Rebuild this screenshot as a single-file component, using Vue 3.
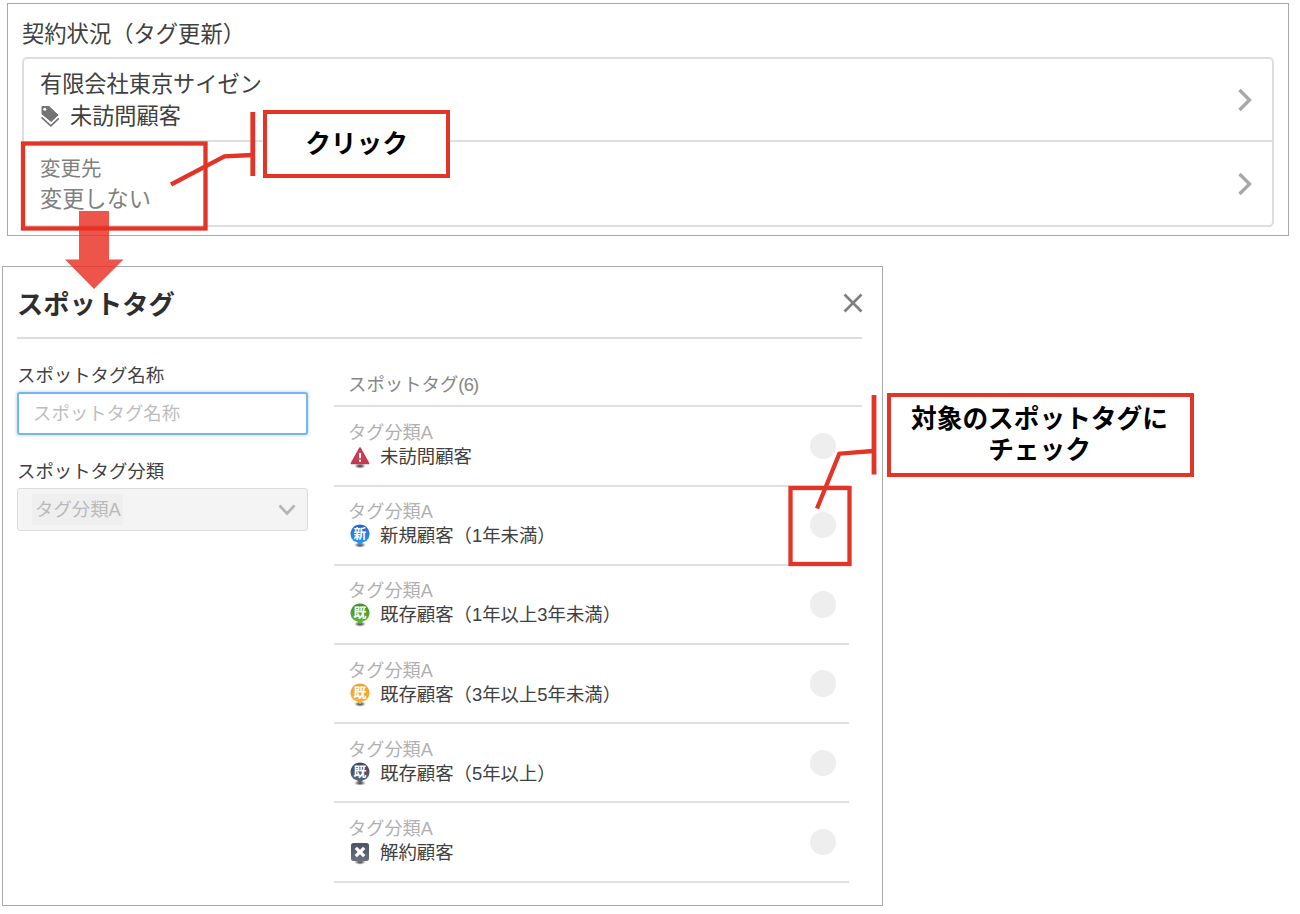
<template>
  <div class="page">
    <section class="contract-panel">
      <h2 class="contract-title">契約状況（タグ更新）</h2>
      <div class="contract-box">
        <div class="contract-row current">
          <div class="row-text">
            <div class="company">有限会社東京サイゼン</div>
            <div class="current-tag">
              <svg class="tags-icon" viewBox="0 0 20 24">
                <path d="M2 1.500h7l9 8.500-6.800 6.500L2 9z" fill="#747474" stroke="#747474" stroke-linejoin="round" />
                <circle cx="4.800" cy="4.300" r="1.500" fill="#fff" />
                <path d="M1.600 12.400l9.200 8.500 8-7.500" fill="none" stroke="#747474" stroke-width="1.600" />
              </svg>
              <span>未訪問顧客</span>
            </div>
          </div>
          <svg class="chevron" viewBox="0 0 14 24"><path d="M1.500 2L11.500 12 1.500 22" fill="none" stroke="#a8a8a8" stroke-width="3.400" /></svg>
        </div>
        <div class="contract-row next">
          <div class="row-text">
            <div class="change-label">変更先</div>
            <div class="change-value">変更しない</div>
          </div>
          <svg class="chevron" viewBox="0 0 14 24"><path d="M1.500 2L11.500 12 1.500 22" fill="none" stroke="#a8a8a8" stroke-width="3.400" /></svg>
        </div>
      </div>
    </section>

    <section class="modal">
      <header class="modal-header">
        <h1>スポットタグ</h1>
        <button class="close-button">
          <svg viewBox="0 0 20 20"><path d="M1.500 1.500l17 17M18.500 1.500l-17 17" fill="none" stroke="#808080" stroke-width="2.700" /></svg>
        </button>
      </header>

      <div class="modal-body">
        <form class="filters">
          <label for="tag-name">スポットタグ名称</label>
          <input id="tag-name" v-model="keyword" class="name-input" type="text" placeholder="スポットタグ名称" />
          <label class="category-label">スポットタグ分類</label>
          <div class="category-select">
            <span class="chip">タグ分類A</span>
            <svg class="arrow-down" viewBox="0 0 18 12"><path d="M1.500 1.500L9 9.500l7.500-8" fill="none" stroke="#b4b4b4" stroke-width="2.600" /></svg>
          </div>
        </form>

        <div class="tag-area">
          <div class="tag-count">スポットタグ<span>({{ tags.length }})</span></div>
          <ul class="tag-list">
            <li v-for="tag in tags" :key="tag.id" class="tag-row">
              <div class="tag-text">
                <div class="tag-category">{{ tag.category }}</div>
                <div class="tag-name">
                  <svg class="pin" viewBox="0 0 20 24">
                    <defs>
                      <radialGradient :id="'shadow' + tag.id">
                        <stop offset="0" stop-color="#222" stop-opacity="0.95" />
                        <stop offset="0.5" stop-color="#444" stop-opacity="0.6" />
                        <stop offset="1" stop-color="#777" stop-opacity="0" />
                      </radialGradient>
                      <linearGradient :id="'fill' + tag.id" x1="0" y1="0" x2="0" y2="1">
                        <stop offset="0" :stop-color="tag.top" />
                        <stop offset="1" :stop-color="tag.bottom" />
                      </linearGradient>
                    </defs>
                    <ellipse cx="10" cy="21" rx="6" ry="2.800" :fill="`url(#shadow${tag.id})`" />
                    <template v-if="tag.shape === 'alert'">
                      <path d="M10 3L18.600 18.500H1.400z" :fill="`url(#fill${tag.id})`" :stroke="tag.bottom" stroke-width="1.600" stroke-linejoin="round" />
                      <path d="M10 8v5.200M10 14.800v2" stroke="#fff" stroke-width="2" />
                    </template>
                    <template v-else-if="tag.shape === 'cross'">
                      <path d="M3.500 2h13a2.500 2.500 0 0 1 2.500 2.500v13a2.500 2.500 0 0 1-2.500 2.500H12l-2 1.600-2-1.600H3.500a2.500 2.500 0 0 1-2.500-2.500v-13a2.500 2.500 0 0 1 2.500-2.500z" :fill="`url(#fill${tag.id})`" />
                      <path d="M5.800 6.800l8.400 8.400M14.200 6.800l-8.400 8.400" stroke="#fff" stroke-width="3.200" />
                    </template>
                    <template v-else>
                      <path d="M10 .5a9.400 9.400 0 0 1 6.300 16.400L13 18.300 10 21.500l-3-3.200-3.300-1.400A9.400 9.400 0 0 1 10 .5z" :fill="`url(#fill${tag.id})`" />
                      <text x="10" y="14.300" text-anchor="middle" class="pin-text">{{ tag.mark }}</text>
                    </template>
                  </svg>
                  <span>{{ tag.name }}</span>
                </div>
              </div>
              <span class="check-circle"></span>
            </li>
          </ul>
        </div>
      </div>
    </section>

    <!-- guide lines drawn over both screens -->
    <svg class="guides" width="1300" height="914" viewBox="0 0 1300 914">
      <g fill="none" stroke="#e23427" stroke-width="4.300">
        <rect x="23" y="143.500" width="182.500" height="85" />
        <rect x="790.500" y="488" width="59" height="76" />
        <path d="M171 184.500L224.500 156.300L252 155" />
        <path d="M817 508.500L839.300 453.700L873 451" />
        <path d="M252.800 112v64M874 395v79.500" stroke-width="4.800" />
      </g>
      <path d="M79 211h30v48.500h14.500L94 289 65 259.500h14z" fill="#e92e22" fill-opacity="0.820" />
    </svg>
    <div class="callout click">クリック</div>
    <div class="callout check">対象のスポットタグに<br />チェック</div>
  </div>
</template>

<script setup>
import { ref } from 'vue';

const keyword = ref('');

const tags = [
  { id: 1, category: 'タグ分類A', name: '未訪問顧客', shape: 'alert', top: '#d94a5c', bottom: '#c23a50' },
  { id: 2, category: 'タグ分類A', name: '新規顧客（1年未満）', shape: 'pin', mark: '新', top: '#2463cf', bottom: '#2e9bf0' },
  { id: 3, category: 'タグ分類A', name: '既存顧客（1年以上3年未満）', shape: 'pin', mark: '既', top: '#3f9429', bottom: '#67b92e' },
  { id: 4, category: 'タグ分類A', name: '既存顧客（3年以上5年未満）', shape: 'pin', mark: '既', top: '#eda02c', bottom: '#f4b638' },
  { id: 5, category: 'タグ分類A', name: '既存顧客（5年以上）', shape: 'pin', mark: '既', top: '#41455f', bottom: '#62677c' },
  { id: 6, category: 'タグ分類A', name: '解約顧客', shape: 'cross', top: '#4c5163', bottom: '#6c7484' },
];
</script>

<style>
body {
  background: #fff;
}
</style>

<style scoped>
.page {
  position: relative;
  width: 1300px;
  height: 914px;
  overflow: hidden;
  font-family: "Liberation Sans", "Noto Sans CJK JP", sans-serif;
  color: #404040;
}

.page * {
  box-sizing: border-box;
}

.contract-panel {
  width: 1282px;
  height: 233px;
  margin: 3px 0 0 7px;
  padding: 15px 14px 0;
  border: 1px solid #a9a9a9;
  display: flow-root;
}

.contract-title {
  margin: 0;
  height: 38px;
  font-size: 22.3px;
  font-weight: 400;
  line-height: 32px;
}

.contract-box {
  height: 170px;
  border: 2px solid #dfdfdf;
  border-radius: 5px;
}

.contract-row {
  display: flex;
  align-items: center;
  justify-content: space-between;
  margin-left: 16px;
  padding-right: 20px;
  height: 83px;
}

.contract-row.current {
  border-bottom: 2px solid #dfdfdf;
}

.row-text {
  font-size: 22.2px;
  line-height: 32px;
}

.current .row-text {
  padding-top: 2px;
}

.current-tag {
  display: flex;
  align-items: center;
  gap: 10px;
}

.tags-icon {
  width: 20px;
  height: 24px;
}

.next .row-text {
  color: #808080;
  line-height: 31px;
}

.change-label {
  font-size: 20.5px;
}

.chevron {
  width: 14px;
  height: 24px;
}

.modal {
  width: 881px;
  height: 640px;
  margin: 30px 0 0 2px;
  padding: 0 20px 0 14px;
  border: 1px solid #a9a9a9;
}

.modal-header {
  display: flex;
  justify-content: space-between;
  align-items: center;
  height: 72px;
  padding-top: 2px;
  border-bottom: 2px solid #dcdcdc;
}

.modal-header h1 {
  margin: 0;
  padding-top: 3px;
  font-size: 26.3px;
  line-height: 36px;
  color: #2e2e2e;
}

.close-button {
  width: 20px;
  height: 20px;
  margin-right: -1px;
  padding: 0;
  border: none;
  background: none;
}

.close-button svg {
  display: block;
}

.modal-body {
  display: flex;
  gap: 26px;
}

.filters {
  display: flex;
  flex-direction: column;
  width: 291px;
  padding-top: 22px;
  font-size: 18.4px;
}

.filters label {
  height: 31px;
  padding-top: 1px;
  line-height: 28px;
}

.name-input {
  height: 43px;
  padding: 0 14px;
  border: 2px solid #79b5ec;
  border-radius: 3px;
  box-shadow: 0 0 3px 1px #c9e3fa;
  font: inherit;
  outline: none;
}

.name-input::placeholder {
  color: #bdbdbd;
}

.filters .category-label {
  margin-top: 22px;
}

.category-select {
  display: flex;
  align-items: center;
  justify-content: space-between;
  height: 43px;
  padding: 0 11px 0 14px;
  background: #f4f4f4;
  border: 1.5px solid #dcdcdc;
  border-radius: 3px;
}

.chip {
  padding: 0 2px 0 3px;
  background: #efefef;
  color: #b9b9b9;
  line-height: 31px;
}

.arrow-down {
  width: 18px;
  height: 12px;
}

.tag-area {
  flex: 1;
  font-size: 18.4px;
}

.tag-count {
  height: 68.4px;
  padding: 32px 0 0 14px;
  border-bottom: 2px solid #e0e0e0;
  color: #868686;
  line-height: 28px;
}

.tag-count span {
  letter-spacing: -0.8px;
}

.tag-list {
  margin: 0 13px 0 0;
  padding: 0;
  list-style: none;
}

.tag-row {
  display: flex;
  justify-content: space-between;
  align-items: center;
  height: 79.2px;
  padding: 0 13px 0 14px;
  border-bottom: 2px solid #e0e0e0;
}

.tag-text {
  padding-bottom: 2px;
}

.tag-category {
  color: #b0b0b0;
  font-size: 18.2px;
  line-height: 24px;
}

.tag-name {
  display: flex;
  align-items: center;
  gap: 10px;
  margin-left: 2px;
  line-height: 24px;
}

.pin {
  width: 20px;
  height: 24px;
}

.pin-text {
  font-size: 12.8px;
  font-weight: 700;
  fill: #fff;
}

.check-circle {
  width: 26.4px;
  height: 26.4px;
  border-radius: 50%;
  background: #eee;
}

.guides {
  position: absolute;
  top: 0;
  left: 0;
}

.callout {
  position: absolute;
  display: flex;
  align-items: center;
  justify-content: center;
  border: 4px solid #e23427;
  background: #fff;
  color: #000;
  font-size: 25.7px;
  font-weight: 700;
  line-height: 31px;
  text-align: center;
}

.callout.click {
  left: 263px;
  top: 110px;
  width: 187px;
  height: 68px;
}

.callout.check {
  left: 887px;
  top: 393px;
  width: 307px;
  height: 84px;
  padding-right: 2px;
}
</style>
